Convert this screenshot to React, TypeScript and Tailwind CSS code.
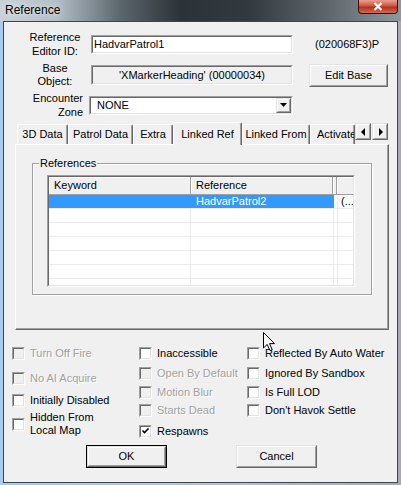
import React from "react";

type BoxProps = { className?: string; inner?: string; children?: React.ReactNode };

// 2px sunken edge used by edits, list views and check boxes
function Sunken({ className = "", inner = "", children }: BoxProps) {
  return (
    <div className={`border border-t-[#a0a0a0] border-l-[#a0a0a0] border-r-white border-b-white ${className}`}>
      <div className={`h-full border border-t-[#696969] border-l-[#696969] border-r-[#e3e3e3] border-b-[#e3e3e3] ${inner}`}>
        {children}
      </div>
    </div>
  );
}

// 2px raised edge used by push buttons
function Raised({ className = "", inner = "", children }: BoxProps) {
  return (
    <div className={`border border-t-[#e3e3e3] border-l-[#e3e3e3] border-r-[#696969] border-b-[#696969] bg-[#f0f0f0] ${className}`}>
      <div className={`h-full border border-t-white border-l-white border-r-[#a0a0a0] border-b-[#a0a0a0] ${inner}`}>
        {children}
      </div>
    </div>
  );
}

function Check({ checked = false, disabled = false }) {
  return (
    <Sunken className="w-[13px] h-[13px] shrink-0" inner={disabled ? "bg-[#f0f0f0]" : "bg-white"}>
      {checked && (
        <svg width="9" height="9" viewBox="0 0 9 9" className="block">
          <path d="M1.5 3.5 L3.5 5.5 L7.5 1.5" fill="none" stroke="#000" strokeWidth="1.6" />
        </svg>
      )}
    </Sunken>
  );
}

type Opt = { label: React.ReactNode; checked?: boolean; disabled?: boolean; cls: string };

function Option({ label, checked, disabled, cls }: Opt) {
  return (
    <div className={`flex items-center gap-[5px] ${cls}`}>
      <Check checked={checked} disabled={disabled} />
      <span
        className={`leading-[13px] whitespace-nowrap ${
          disabled ? "text-[#a0a0a0] [text-shadow:1px_1px_0_#fff]" : "text-black"
        }`}
      >
        {label}
      </span>
    </div>
  );
}

const col1: Opt[] = [
  { label: "Turn Off Fire", disabled: true, cls: "h-[13px]" },
  { label: "No AI Acquire", disabled: true, cls: "h-[13px] mt-[12px]" },
  { label: "Initially Disabled", cls: "h-[13px] mt-[9px]" },
  { label: <>Hidden From<br />Local Map</>, cls: "h-[26px] mt-[4px]" },
];

const col2: Opt[] = [
  { label: "Inaccessible", cls: "h-[13px]" },
  { label: "Open By Default", disabled: true, cls: "h-[13px] mt-[7px]" },
  { label: "Motion Blur", disabled: true, cls: "h-[13px] mt-[6px]" },
  { label: "Starts Dead", disabled: true, cls: "h-[13px] mt-[5px]" },
  { label: "Respawns", checked: true, cls: "h-[13px] mt-[8px]" },
];

const col3: Opt[] = [
  { label: "Reflected By Auto Water", cls: "h-[13px]" },
  { label: "Ignored By Sandbox", cls: "h-[13px] mt-[7px]" },
  { label: "Is Full LOD", cls: "h-[13px] mt-[6px]" },
  { label: "Don't Havok Settle", cls: "h-[13px] mt-[5px]" },
];

const tabs = [
  { name: "3D Data", w: "w-[51px] justify-center" },
  { name: "Patrol Data", w: "w-[65px] justify-center" },
  { name: "Extra", w: "w-[40px] justify-center" },
  { name: "Linked Ref", w: "w-[69px]", active: true },
  { name: "Linked From", w: "w-[68px] justify-center" },
  { name: "Activate", w: "w-[45px] pl-[6px]" },
];

function Arrow({ dir }: { dir: "left" | "right" | "down" }) {
  const d = dir === "left" ? "M5 0 L5 8 L1 4 Z" : dir === "right" ? "M2 0 L2 8 L6 4 Z" : "M0 2 L7 2 L3.5 6 Z";
  return (
    <svg width="7" height="8" viewBox="0 0 7 8">
      <path d={d} fill="#000" />
    </svg>
  );
}

function LinkedRefList() {
  const rows = [0, 1, 2, 3, 4, 5, 6];
  return (
    <Sunken className="ml-[14px] mt-[5px] w-[308px] h-[112px]" inner="bg-white overflow-hidden">
      {/* column header */}
      <div className="flex h-[18px] bg-[#f0f0f0] border-b border-[#a0a0a0]">
        <div className="w-[142px] pl-[5px] flex items-center border-r border-r-[#a0a0a0] shadow-[inset_1px_1px_0_#fff]">Keyword</div>
        <div className="w-[142px] pl-[5px] flex items-center border-r border-r-[#a0a0a0] shadow-[inset_1px_1px_0_#fff]">Reference</div>
        <div className="w-[4px] border-r border-r-[#a0a0a0] shadow-[inset_1px_1px_0_#fff]" />
        <div className="flex-1 shadow-[inset_1px_1px_0_#fff]" />
      </div>
      {rows.map((i) => (
        <div key={i} className="flex h-[14px] border-b border-[#ececec] leading-[13px]">
          <div className={`w-[142px] ${i === 0 ? "bg-[#3399ff]" : "border-r border-r-[#ececec]"}`} />
          <div className={`w-[143px] pl-[5px] ${i === 0 ? "bg-[#3399ff] text-white border-r border-r-[#3399ff]" : "border-r border-r-[#ececec]"}`}>
            {i === 0 ? "HadvarPatrol2" : ""}
          </div>
          <div className="w-[4px] border-r border-r-[#ececec]" />
          <div className="flex-1 pl-[3px] whitespace-nowrap overflow-hidden">{i === 0 ? "(..." : ""}</div>
        </div>
      ))}
    </Sunken>
  );
}

export default function App() {
  return (
    <div className="relative w-[401px] h-[485px] overflow-hidden bg-gradient-to-r from-[#a9cbee] via-[#b7c4d0] to-[#a9a9b2] font-['Liberation_Sans',Arial,sans-serif] text-[11px] text-black">
      {/* title bar */}
      <div className="h-[21px] flex justify-between bg-[linear-gradient(90deg,#c9d2d8_0%,#b3bec6_14%,#5c666d_30%,#2c3338_45%,#333a3f_62%,#5a6268_80%,#8e979d_100%)]">
        <span className="self-center pl-[5px] pb-[2px] text-[12px] text-black [text-shadow:0_0_6px_#fff]">Reference</span>
        <div className="mr-[3px] w-[40px] h-[14px] rounded-b-[4px] border border-t-0 border-[#3a1010] bg-[linear-gradient(180deg,#e8a090_0%,#d2543e_45%,#b5301c_55%,#d46a50_100%)] flex items-center justify-center">
          <svg width="10" height="9" viewBox="0 0 10 9">
            <path d="M1.5 1 L8.5 8 M8.5 1 L1.5 8" stroke="#fff" strokeWidth="2.2" />
          </svg>
        </div>
      </div>

      {/* dialog client area */}
      <div className="ml-[3px] w-[395px] h-[462px] border border-[#3c4650] bg-[#f0f0f0] flex flex-col">
        <div className="flex items-center h-[28px] mt-[8px] pl-[21px]">
          <div className="w-[60px] text-center leading-[14px]">Reference<br />Editor ID:</div>
          <Sunken className="ml-[6px] w-[202px] h-[19px]" inner="bg-white flex items-center pl-[1px]">
            HadvarPatrol1
          </Sunken>
          <span className="ml-[22px]">(020068F3)P</span>
        </div>

        <div className="flex items-center h-[28px] mt-[3px] pl-[21px]">
          <div className="w-[60px] text-center leading-[13px]">Base<br />Object:</div>
          <Sunken className="ml-[6px] w-[202px] h-[20px]" inner="bg-[#f0f0f0] flex items-center justify-center">
            'XMarkerHeading' (00000034)
          </Sunken>
          <Raised className="ml-[16px] w-[79px] h-[23px]" inner="flex items-center justify-center">Edit Base</Raised>
        </div>

        <div className="flex items-center h-[28px] mt-[2px] pl-[21px]">
          <div className="w-[60px] text-right pr-[2px] leading-[14px]">Encounter<br />Zone</div>
          <Sunken className="ml-[4px] w-[204px] h-[19px]" inner="bg-white flex items-center">
            <span className="flex-1 pl-[6px]">NONE</span>
            <Raised className="w-[15px] h-full" inner="flex items-center justify-center">
              <Arrow dir="down" />
            </Raised>
          </Sunken>
        </div>

        {/* tab control */}
        <div className="ml-[11px] w-[374px] mt-[3px]">
          <div className="flex items-end h-[22px] pl-[2px]">
            {tabs.map((t) =>
              t.active ? (
                <div
                  key={t.name}
                  className={`${t.w} h-[23px] -mb-[1px] relative z-10 bg-[#f0f0f0] border-t border-l border-white border-r border-r-[#696969] rounded-t-[2px] shadow-[inset_-1px_0_0_#a0a0a0] flex justify-center pt-[3px]`}
                >
                  {t.name}
                </div>
              ) : (
                <div
                  key={t.name}
                  className={`${t.w} h-[20px] border-t border-l border-white border-r border-r-[#696969] rounded-t-[2px] shadow-[inset_-1px_0_0_#a0a0a0] flex items-center whitespace-nowrap overflow-hidden`}
                >
                  {t.name}
                </div>
              )
            )}
            <div className="self-start mt-[1px] flex">
              <Raised className="w-[16px] h-[17px]" inner="flex items-center justify-center">
                <Arrow dir="left" />
              </Raised>
              <Raised className="ml-[1px] w-[16px] h-[17px]" inner="flex items-center justify-center">
                <Arrow dir="right" />
              </Raised>
            </div>
          </div>
          <div className="h-[186px] border border-t-white border-l-white border-r-[#696969] border-b-[#696969] shadow-[inset_-1px_-1px_0_#a0a0a0] flex flex-col">
            <div className="mt-[18px] ml-[16px] w-[340px] h-[132px] border border-[#a0a0a0] shadow-[1px_1px_0_#fff,inset_1px_1px_0_#fff] flex flex-col">
              <span className="-mt-[7px] ml-[6px] self-start px-[1px] bg-[#f0f0f0] leading-[13px]">References</span>
              <LinkedRefList />
            </div>
          </div>
        </div>

        {/* flags */}
        <div className="flex mt-[17px] h-[92px] pl-[8px]">
          <div className="w-[127px] flex flex-col">
            {col1.map((o, i) => (
              <Option key={i} {...o} />
            ))}
          </div>
          <div className="w-[108px] flex flex-col">
            {col2.map((o, i) => (
              <Option key={i} {...o} />
            ))}
          </div>
          <div className="flex-1 flex flex-col">
            {col3.map((o, i) => (
              <Option key={i} {...o} />
            ))}
          </div>
        </div>

        <div className="flex mt-[6px] pl-[82px] gap-[69px]">
          <div className="w-[81px] h-[23px] border border-black">
            <Raised className="h-full" inner="flex items-center justify-center">OK</Raised>
          </div>
          <Raised className="w-[81px] h-[23px]" inner="flex items-center justify-center">Cancel</Raised>
        </div>
      </div>

      {/* mouse pointer */}
      <svg className="absolute left-[263px] top-[332px]" width="13" height="20" viewBox="0 0 13 20">
        <path d="M0.5 0.5 L0.5 16 L4.2 12.4 L7 18.6 L9.2 17.6 L6.5 11.6 L11.5 11.6 Z" fill="#fff" stroke="#000" strokeWidth="1" />
      </svg>
    </div>
  );
}
